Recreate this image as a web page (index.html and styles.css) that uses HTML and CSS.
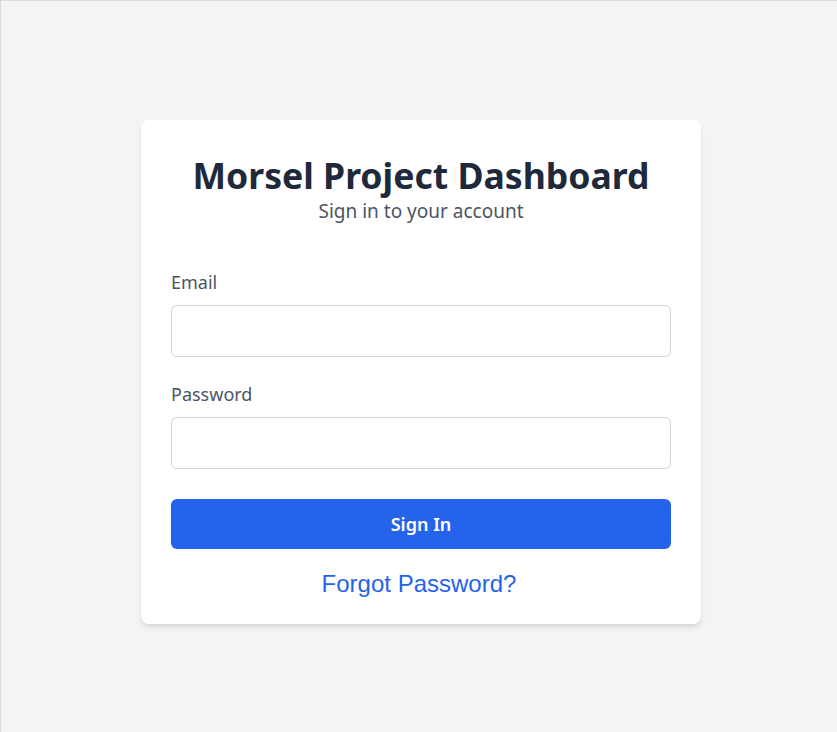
FILE: index.html
```html
<!DOCTYPE html>
<html lang="en">
<head>
<meta charset="utf-8">
<title>Morsel Project Dashboard - Sign In</title>
<link rel="stylesheet" href="styles.css">
</head>
<body>
<div class="page">
  <main class="card">
    <header class="card-header">
      <h1 class="title">Morsel Project Dashboard</h1>
      <p class="subtitle">Sign in to your account</p>
    </header>
    <form class="form">
      <div class="field">
        <label class="label" for="email">Email</label>
        <input class="input" id="email" type="email">
      </div>
      <div class="field">
        <label class="label" for="password">Password</label>
        <input class="input" id="password" type="password">
      </div>
      <button class="btn-primary" type="button">Sign In</button>
      <a class="link" href="#">Forgot Password?</a>
    </form>
  </main>
</div>
</body>
</html>
```
FILE: styles.css
```css
* { box-sizing: border-box; }
html, body { margin: 0; padding: 0; }
body {
  background: #f3f4f6;
  font-family: "Noto Sans", "Open Sans", sans-serif;
  color: #1f2937;
  border-top: 1px solid #d9dadc;
  border-left: 1px solid #d9dadc;
  min-height: 100vh;
}
.page {
  padding: 119px 0 0 4px;
}
.card {
  width: 560px;
  margin: 0 auto;
  background: #ffffff;
  border-radius: 8px;
  box-shadow: 0 4px 6px -1px rgba(0,0,0,0.1), 0 2px 4px -2px rgba(0,0,0,0.1);
  padding: 31px 30px 25px;
}
.card-header {
  text-align: center;
}
.title {
  margin: 0;
  font-size: 35.6px;
  font-weight: 700;
  line-height: 48px;
  color: #1e293b;
}
.subtitle {
  margin: 0;
  font-size: 19px;
  line-height: 24px;
  color: #4b5563;
}
.form {
  display: flex;
  flex-direction: column;
  margin-top: 47px;
}
.field {
  display: flex;
  flex-direction: column;
  margin-bottom: 25px;
}
.label {
  font-size: 18px;
  line-height: 24px;
  color: #4b5563;
  margin-bottom: 11px;
}
.input {
  height: 52px;
  border: 1px solid #d1d5db;
  border-radius: 6px;
  background: #fff;
  font-size: 16px;
  padding: 0 12px;
}
.btn-primary {
  height: 50px;
  margin-top: 5px;
  border: none;
  border-radius: 6px;
  background: #2563eb;
  color: #fff;
  font-family: "Noto Sans", "Open Sans", sans-serif;
  font-size: 18px;
  font-weight: 600;
}
.link {
  align-self: center;
  margin-top: 20px;
  margin-right: 4px;
  font-family: "Liberation Sans", Arial, sans-serif;
  font-size: 24px;
  line-height: 30px;
  color: #2563eb;
  text-decoration: none;
}
```
